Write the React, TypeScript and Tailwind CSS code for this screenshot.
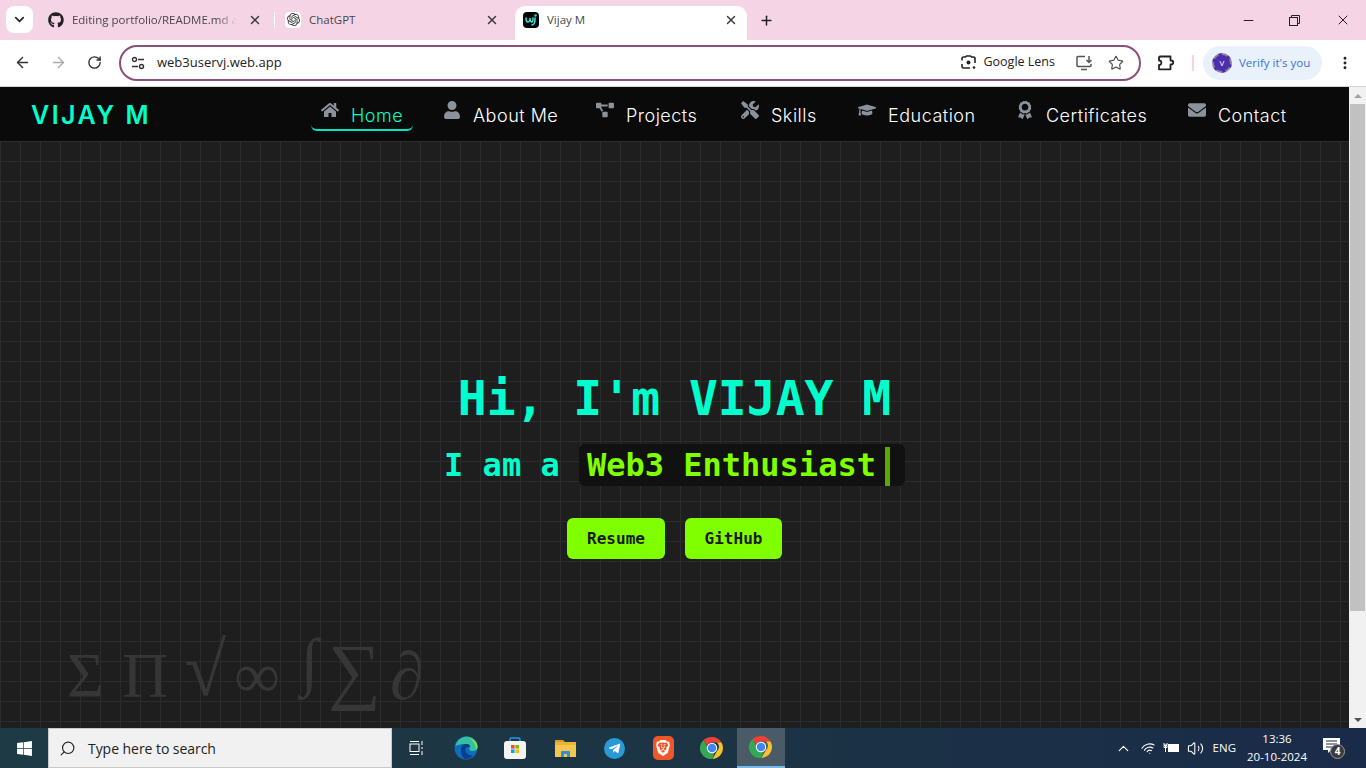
import {
  FaAward,
  FaEnvelope,
  FaGithub,
  FaGraduationCap,
  FaHome,
  FaProjectDiagram,
  FaTelegramPlane,
  FaTools,
  FaUser,
  FaWindows,
} from "react-icons/fa";
import { SiBrave, SiOpenai } from "react-icons/si";
import {
  ArrowLeft,
  ArrowRight,
  ChevronDown,
  ChevronUp,
  Minus,
  MoreVertical,
  Plus,
  RotateCw,
  Search,
  Star,
  Volume2,
  Wifi,
  X,
} from "lucide-react";

const navItems = [
  { label: "Home", icon: FaHome, width: "w-[52px]", active: true },
  { label: "About Me", icon: FaUser, width: "w-[83px]" },
  { label: "Projects", icon: FaProjectDiagram, width: "w-[75px]" },
  { label: "Skills", icon: FaTools, width: "w-[47px]" },
  { label: "Education", icon: FaGraduationCap, width: "w-[88px]" },
  { label: "Certificates", icon: FaAward, width: "w-[102px]" },
  { label: "Contact", icon: FaEnvelope, width: "w-[70px]" },
];

function ChromeLogo({ size = 24 }: { size?: number }) {
  return (
    <svg width={size} height={size} viewBox="0 0 48 48">
      <path d="M24 2a22 22 0 0 1 19 11H24a11 11 0 0 0-10 6L7 8a22 22 0 0 1 17-6z" fill="#ea4335" />
      <path d="M43 13a22 22 0 0 1-18 33l9-16a11 11 0 0 0 0-17z" fill="#fbc02d" />
      <path d="M25 46A22 22 0 0 1 7 8l9 16a11 11 0 0 0 13 9z" fill="#34a853" />
      <circle cx="24" cy="24" r="10.5" fill="#fff" />
      <circle cx="24" cy="24" r="8.5" fill="#4285f4" />
    </svg>
  );
}

function EdgeLogo() {
  return (
    <svg width="24" height="24" viewBox="0 0 48 48">
      <circle cx="24" cy="24" r="23" fill="#0f6cbd" />
      <path d="M3 20C6 8 16 1 25 1c12 0 22 9 22 20 0 7-6 10-12 9-4-1-5-4-4-6-2-6-8-9-14-8-6 1-12 3-14 4z" fill="#35c1a0" />
      <path d="M30 4c9 2 17 9 17 17 0 3-1 5-3 7 0-9-5-19-14-24z" fill="#7fdc5c" />
      <path d="M14 26c0-6 5-10 11-10 6 0 8 4 7 7-5-3-10 0-9 6 1 6 7 10 15 10-4 5-10 8-16 7-6-3-8-12-8-20z" fill="#0b3f8a" />
    </svg>
  );
}

function StoreLogo() {
  return (
    <svg width="24" height="24" viewBox="0 0 24 24">
      <path d="M7 6V3.5A1.5 1.5 0 0 1 8.500 2h7A1.500 1.500 0 0 1 17 3.500V6" fill="none" stroke="#1b9de2" strokeWidth="1.6" />
      <rect x="1" y="5" width="22" height="18" rx="3" fill="#f4f4f4" />
      <rect x="8" y="9" width="3.600" height="3.600" fill="#f25022" />
      <rect x="12.400" y="9" width="3.600" height="3.600" fill="#7fba00" />
      <rect x="8" y="13.400" width="3.600" height="3.600" fill="#00a4ef" />
      <rect x="12.400" y="13.400" width="3.600" height="3.600" fill="#ffb900" />
    </svg>
  );
}

function FolderLogo() {
  return (
    <svg width="24" height="24" viewBox="0 0 24 24">
      <path d="M2 4h8l2 2H2z" fill="#d99e1f" />
      <rect x="2" y="6" width="21" height="15" fill="#f5c74e" />
      <rect x="2" y="6" width="21" height="3" fill="#e9b438" />
      <path d="M8 21v-5a1 1 0 0 1 1-1h7a1 1 0 0 1 1 1v5h-3v-3h-3v3z" fill="#2f8fd8" />
    </svg>
  );
}

function TuneIcon() {
  return (
    <svg width="14" height="14" viewBox="0 0 14 14" fill="none" stroke="#333" strokeWidth="1.400">
      <circle cx="3.500" cy="3.500" r="2" />
      <path d="M7 3.500h6M1 10.500h6" />
      <circle cx="10.500" cy="10.500" r="2" />
    </svg>
  );
}

function LensIcon() {
  return (
    <svg width="15" height="15" viewBox="0 0 15 15" fill="none" stroke="#222" strokeWidth="1.600">
      <path d="M1 5.500V3.500A1.500 1.500 0 0 1 2.500 2H4.500l1-1h4l1 1h2A1.500 1.500 0 0 1 14 3.500V8M1 9v2.500A1.500 1.500 0 0 0 2.500 13H9" />
      <circle cx="7.500" cy="7.500" r="2" fill="#222" stroke="none" />
      <circle cx="13" cy="12.500" r="1.300" fill="#222" stroke="none" />
    </svg>
  );
}

function InstallIcon() {
  return (
    <svg width="17" height="16" viewBox="0 0 17 16" fill="none" stroke="#555" strokeWidth="1.500">
      <path d="M9 1.500H2A1 1 0 0 0 1 2.500v8a1 1 0 0 0 1 1h12a1 1 0 0 0 1-1V9" />
      <path d="M5 14.500h6M13 1v6M10.500 5l2.500 2.500L15.500 5" />
    </svg>
  );
}

function ExtensionIcon() {
  return (
    <svg width="18" height="18" viewBox="0 0 18 18" fill="none" stroke="#222" strokeWidth="1.800" strokeLinejoin="round">
      <path d="M3 2.500h10.500v4h.8a1.700 1.700 0 0 1 0 3.800h-.8v5H2V11h.6a2.300 2.300 0 0 0 0-4.500H2V3.500a1 1 0 0 1 1-1z" />
    </svg>
  );
}

function RestoreIcon() {
  return (
    <svg width="11" height="11" viewBox="0 0 11 11" fill="none" stroke="#222" strokeWidth="1">
      <rect x="0.500" y="2.500" width="8" height="8" />
      <path d="M2.500 2.500V0.500h8v8H8.500" />
    </svg>
  );
}

function TabClose() {
  return <X size={14} strokeWidth={2.5} className="text-[#3c3c3c]" />;
}

function BrowserChrome() {
  return (
    <div className="shrink-0 font-['Open_Sans',sans-serif]">
      {/* Tab strip */}
      <div className="flex h-10 items-end bg-[#f5d5e5] pl-[6px] text-[11.5px] text-[#474747]">
        <div className="mb-[7px] flex h-[27px] w-[27px] items-center justify-center rounded-lg bg-white">
          <ChevronDown size={15} strokeWidth={2.6} className="text-[#222]" />
        </div>
        <div className="mb-[7px] ml-[15px] flex h-[27px] w-[227px] items-center">
          <FaGithub size={16} className="text-[#222]" />
          <span className="ml-2 w-[166px] overflow-hidden whitespace-nowrap [mask-image:linear-gradient(90deg,black_88%,transparent)]">
            Editing portfolio/README.md a
          </span>
          <span className="ml-[11px]">
            <TabClose />
          </span>
          <span className="ml-[12px] h-4 w-px bg-white" />
        </div>
        <div className="mb-[7px] ml-[10px] flex h-[27px] w-[230px] items-center">
          <span className="flex h-4 w-4 items-center justify-center rounded-sm bg-white">
            <SiOpenai size={13} className="text-[#333]" />
          </span>
          <span className="ml-2 w-[176px]">ChatGPT</span>
          <TabClose />
        </div>
        <div className="flex h-[34px] w-[232px] items-center rounded-t-[10px] bg-white pb-[6px] pl-2 pr-[9px]">
          <span className="flex h-4 w-4 items-center justify-center rounded-sm bg-black">
            <svg width="12" height="12" viewBox="0 0 12 12" fill="none" stroke="#3fe6e0" strokeWidth="1.500" strokeLinecap="round">
              <path d="M1 4c0 3 1 4 2 4s2-2 2-4c0 3 1 4 2 4s1-2 1-4" />
              <path d="M10 4c0 4 0 6-3 7" />
              <circle cx="10.500" cy="1.500" r=".5" />
            </svg>
          </span>
          <span className="ml-2 flex-1">Vijay M</span>
          <TabClose />
        </div>
        <Plus size={15} strokeWidth={2.4} className="mb-[12px] ml-3 text-[#222]" />
        <div className="mb-[12px] ml-auto flex items-center text-[#222]">
          <Minus size={15} strokeWidth={1.7} className="mr-[33px]" />
          <RestoreIcon />
          <X size={16} strokeWidth={1.500} className="mr-[15px] ml-[35px]" />
        </div>
      </div>

      {/* Toolbar */}
      <div className="flex h-[47px] items-center border-b border-[#d4d4d4] bg-white pb-[1px] text-[#333]">
        <ArrowLeft size={17} strokeWidth={2} className="ml-[14px]" />
        <ArrowRight size={17} strokeWidth={2} className="ml-[19px] text-[#aaa]" />
        <RotateCw size={15} strokeWidth={2.2} className="ml-5" />
        <div className="ml-[17px] flex h-[36px] w-[1022px] items-center rounded-full border-2 border-[#8b4f78] pl-[10px] pr-[15px]">
          <TuneIcon />
          <span className="ml-[12px] text-[13px] text-[#222]">web3uservj.web.app</span>
          <span className="ml-auto">
            <LensIcon />
          </span>
          <span className="ml-[7px] text-[12.5px] font-medium text-[#222]">Google Lens</span>
          <span className="ml-[21px]">
            <InstallIcon />
          </span>
          <Star size={16} strokeWidth={1.800} className="ml-[15px] text-[#555]" />
        </div>
        <span className="ml-[16px]">
          <ExtensionIcon />
        </span>
        <span className="ml-[17px] h-4 w-[2px] bg-[#f5d5e5]" />
        <div className="ml-[9px] flex h-[34px] w-[119px] items-center rounded-full bg-[#e9f1fb] pl-[9px] text-[11.5px] text-[#3a74d8]">
          <span className="flex h-5 w-5 items-center justify-center rounded-full border-2 border-dashed border-[#8d84a8] bg-[#4d2eaa] text-[8px] text-white">
            V
          </span>
          <span className="ml-[7px] whitespace-nowrap">Verify it's you</span>
        </div>
        <MoreVertical size={16} strokeWidth={2.4} className="ml-[15px] text-[#222]" />
      </div>
    </div>
  );
}

function Navbar() {
  return (
    <nav className="flex h-[54px] shrink-0 items-center bg-[#0a0a0a] pl-[31px]">
      <span className="mt-[2px] w-[280px] font-['Inter',sans-serif] text-[25px] leading-none font-semibold tracking-[2.500px] text-[#00ffcc]">
        VIJAY M
      </span>
      <ul className="flex items-center gap-5 font-['Inter',sans-serif] text-[18px] font-light tracking-[0.5px]">
        {navItems.map((item) => {
          const Icon = item.icon;
          return (
            <li
              key={item.label}
              className={`mb-[2px] flex h-[36px] items-center gap-3 rounded-b-md border-b-2 px-[10px] ${
                item.active ? "border-[#00e6c0] text-[#00ffcc]" : "border-transparent text-white"
              }`}
            >
              <Icon size={18} className="mb-[5px] text-[#8a929c]" />
              <span className={`${item.width} whitespace-nowrap pt-[6px]`}>{item.label}</span>
            </li>
          );
        })}
      </ul>
    </nav>
  );
}

function Hero() {
  return (
    <main className="relative flex-1 overflow-hidden bg-[#1e1e1e] bg-[linear-gradient(#2c2c2c_1px,transparent_1px),linear-gradient(90deg,#2c2c2c_1px,transparent_1px)] bg-[size:20px_20px] pt-[228px] font-['DejaVu_Sans_Mono',monospace]">
      <div className="flex flex-col items-center">
        <h1 className="text-[48px] leading-[58px] font-bold text-[#00ffcc]">Hi, I'm VIJAY M</h1>
        <div className="mt-[14px] flex items-center text-[32px] font-bold text-[#00ffcc]">
          <span className="whitespace-pre">I am a </span>
          <span className="flex h-[42px] items-center rounded-md bg-[#111111] px-2 text-[#7fff00]">
            Web3 Enthusiast
            <span className="ml-[9px] mt-[3px] h-[39px] w-[5px] bg-[#5aa800]" />
            <span className="w-[7px]" />
          </span>
        </div>
        <div className="mt-[29px] flex gap-5 text-[16px] font-bold text-[#1a1a1a]">
          <button className="h-[41px] w-[98px] rounded-md bg-[#7fff00]">Resume</button>
          <button className="h-[41px] w-[97px] rounded-md bg-[#7fff00]">GitHub</button>
        </div>
      </div>
      <div className="absolute top-[493px] left-[67px] flex items-center font-['Liberation_Serif',serif] text-[64px] leading-[84px] text-[#363636]">
        <span>Σ</span>
        <span className="ml-[18px]">Π</span>
        <span className="-mt-[14px] ml-4 text-[76px]">√</span>
        <span className="ml-[8px]">∞</span>
        <span className="-mt-[28px] ml-[21px]">∫</span>
        <span className="-mt-[12px] ml-[10px] text-[74px]">∑</span>
        <span className="ml-[9px] text-[68px] italic">∂</span>
      </div>
    </main>
  );
}

function Scrollbar() {
  return (
    <div className="flex w-[17px] shrink-0 flex-col items-center bg-[#f1f1f1]">
      <div className="flex h-[17px] items-center">
        <div className="h-0 w-0 border-x-[4px] border-b-[4px] border-x-transparent border-b-[#a3a3a3]" />
      </div>
      <div className="h-[507px] w-[15px] bg-[#c1c1c1]" />
      <div className="mt-auto flex h-[17px] items-center">
        <div className="h-0 w-0 border-x-[4px] border-t-[4px] border-x-transparent border-t-[#505050]" />
      </div>
    </div>
  );
}

function Taskbar() {
  return (
    <div className="flex h-10 shrink-0 items-center bg-gradient-to-r from-[#1d3a45] via-[#1c3444] to-[#1a2b49] font-['Open_Sans',sans-serif] text-white">
      <div className="flex w-12 justify-center">
        <FaWindows size={17} />
      </div>
      <div className="flex h-10 w-[344px] items-center border border-[#c8c8c8] bg-[#f1f1f1] pl-[10px] text-[14px] text-[#222]">
        <Search size={17} strokeWidth={1.600} className="-scale-x-100" />
        <span className="ml-3 tracking-[-0.05px]">Type here to search</span>
      </div>
      <div className="flex w-[49px] justify-center">
        <svg width="16" height="16" viewBox="0 0 16 16" fill="none" stroke="white" strokeWidth="1">
          <rect x="1" y="4" width="9" height="7.500" />
          <path d="M1 1.500h9M1 14.500h9M13 1v4M13 7v2M13 11v4" />
        </svg>
      </div>
      <div className="flex w-[49.500px] justify-center">
        <EdgeLogo />
      </div>
      <div className="flex w-[49.500px] justify-center">
        <StoreLogo />
      </div>
      <div className="flex w-[49.500px] justify-center">
        <FolderLogo />
      </div>
      <div className="flex w-[49px] justify-center">
        <span className="flex h-[21px] w-[21px] items-center justify-center rounded-full bg-[#2a9ad6]">
          <FaTelegramPlane size={13} />
        </span>
      </div>
      <div className="flex w-[49px] justify-center">
        <span className="flex h-6 w-[21px] items-center justify-center rounded-[5px] bg-[#f1562b]">
          <SiBrave size={16} />
        </span>
      </div>
      <div className="flex w-[49px] justify-center">
        <ChromeLogo />
      </div>
      <div className="flex h-10 w-12 items-center justify-center border-b-2 border-[#76b9ed] bg-[#4a5a66]">
        <ChromeLogo />
      </div>
      <div className="ml-auto flex items-center pr-[19px]">
        <ChevronUp size={17} strokeWidth={1.600} />
        <Wifi size={15} strokeWidth={1.800} className="ml-[9px] rotate-[-15deg]" />
        <svg width="17" height="12" viewBox="0 0 17 12" className="ml-[7px]" fill="none" stroke="white">
          <path d="M1 1v2h3V1M2.500 3v3M1 3.500h3v2H1zM2.500 6v4" />
          <rect x="5.500" y="2.500" width="10" height="7" fill="white" />
        </svg>
        <Volume2 size={17} strokeWidth={1.500} className="ml-[7px]" />
        <span className="ml-[9px] text-[11.5px]">ENG</span>
        <div className="ml-[11px] flex w-[60px] flex-col items-center text-[11.5px] leading-[18px]">
          <span>13:36</span>
          <span className="whitespace-nowrap">20-10-2024</span>
        </div>
        <div className="relative ml-[16px] h-5 w-6">
          <svg width="17" height="15" viewBox="0 0 17 15" fill="white">
            <path d="M0 0h17v12h-9l-3 3v-3H0z" />
            <path d="M3 3h11M3 6h11M3 9h11" stroke="#1a2b49" strokeWidth="1" />
          </svg>
          <span className="absolute top-[6px] left-[7px] flex h-[15px] w-[15px] items-center justify-center rounded-full border border-[#999] bg-[#3a3a3a] text-[10px] font-bold">
            4
          </span>
        </div>
      </div>
    </div>
  );
}

export default function App() {
  return (
    <div className="flex h-screen w-full flex-col overflow-hidden">
      <BrowserChrome />
      <div className="flex min-h-0 flex-1">
        <div className="flex min-w-0 flex-1 flex-col">
          <Navbar />
          <Hero />
        </div>
        <Scrollbar />
      </div>
      <Taskbar />
    </div>
  );
}
